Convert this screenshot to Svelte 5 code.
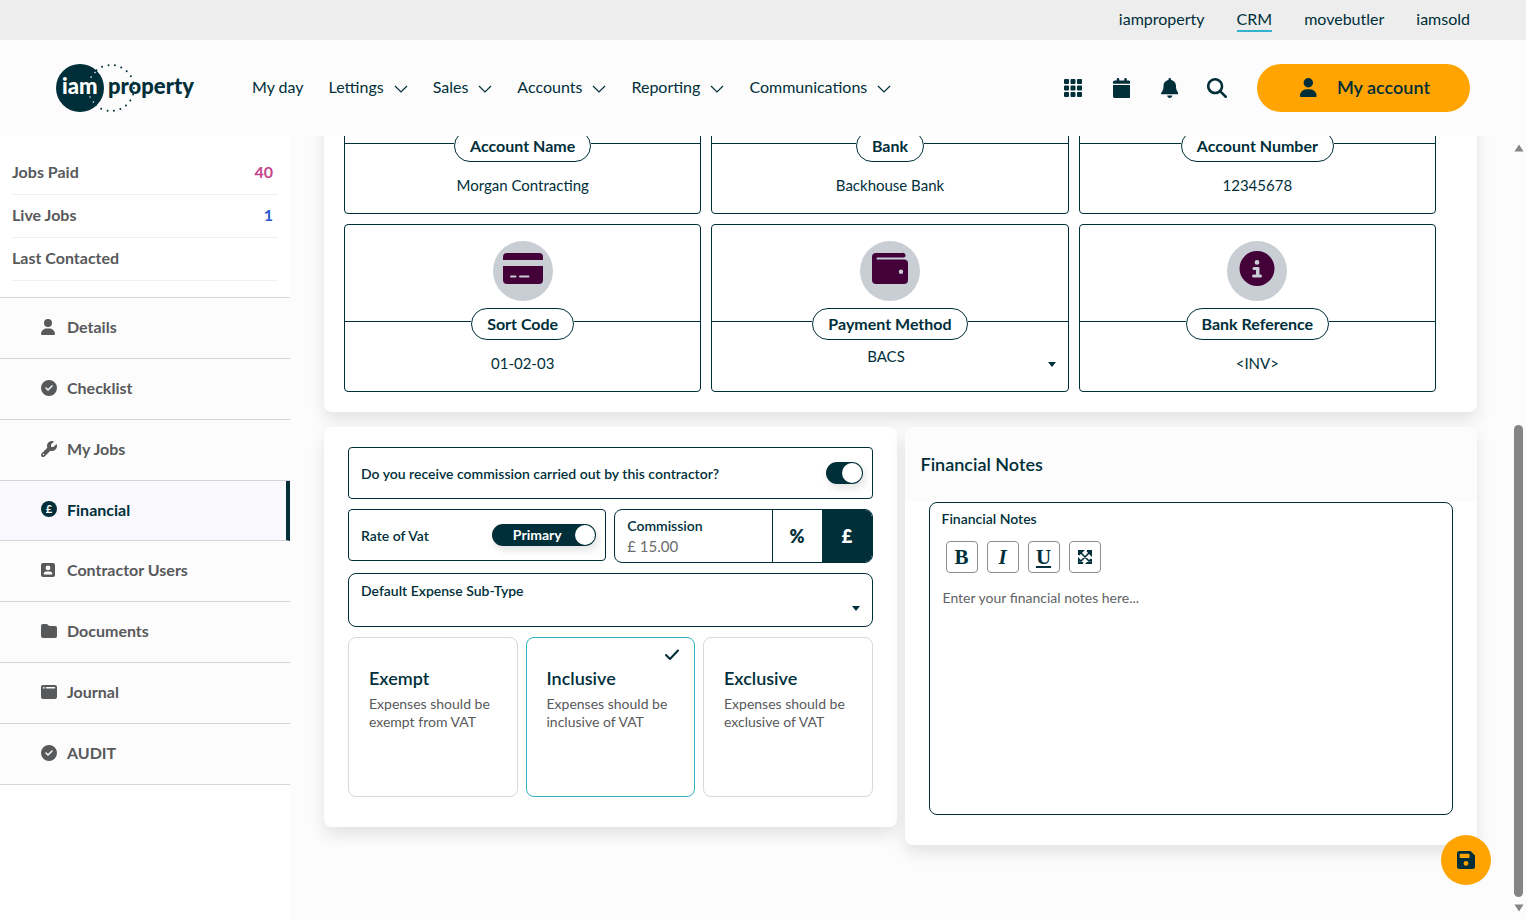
<script lang="ts">
  import { onMount } from "svelte";

  interface Tile {
    id: string;
    label: string;
    value: string;
    icon: string;
    select?: boolean;
  }

  const icons: Record<string, { box: string; d: string }> = {
    user: {
      box: "0 0 448 512",
      d: "M224 256A128 128 0 1 0 224 0a128 128 0 1 0 0 256zm-45.700 48C79.800 304 0 383.800 0 482.300C0 498.700 13.300 512 29.700 512H418.300c16.400 0 29.700-13.300 29.700-29.700C448 383.800 368.200 304 269.700 304H178.300z",
    },
    bell: {
      box: "0 0 448 512",
      d: "M224 0c-17.700 0-32 14.300-32 32V49.900C119.500 61.400 64 124.200 64 200v33.400c0 45.400-15.500 89.500-43.800 124.900L5.300 377c-5.800 7.200-6.900 17.100-2.900 25.400S14.800 416 24 416H424c9.200 0 17.600-5.300 21.600-13.600s2.900-18.200-2.900-25.400l-14.900-18.600C399.500 322.900 384 278.800 384 233.400V200c0-75.800-55.500-138.600-128-150.100V32c0-17.700-14.300-32-32-32zm45.300 493.300c12-12 18.700-28.300 18.700-45.300H160c0 17 6.700 33.300 18.700 45.300s28.300 18.700 45.300 18.700 33.300-6.700 45.300-18.700z",
    },
    search: {
      box: "0 0 512 512",
      d: "M416 208c0 45.900-14.900 88.300-40 122.700L502.600 457.400c12.500 12.500 12.500 32.800 0 45.300s-32.800 12.500-45.300 0L330.700 376c-34.400 25.200-76.800 40-122.700 40C93.100 416 0 322.900 0 208S93.100 0 208 0S416 93.100 416 208zM208 352a144 144 0 1 0 0-288 144 144 0 1 0 0 288z",
    },
    calendar: {
      box: "0 0 448 512",
      d: "M96 32V64H48C21.500 64 0 85.500 0 112v36H448V112c0-26.500-21.500-48-48-48H352V32c0-17.700-14.300-32-32-32s-32 14.300-32 32V64H160V32c0-17.700-14.300-32-32-32S96 14.300 96 32zM448 180H0V464c0 26.500 21.500 48 48 48H400c26.500 0 48-21.500 48-48V180z",
    },
    grid: {
      box: "0 0 18 18",
      d: "M1 0h3a1 1 0 0 1 1 1v3a1 1 0 0 1-1 1H1a1 1 0 0 1-1-1V1a1 1 0 0 1 1-1zM7.500 0h3a1 1 0 0 1 1 1v3a1 1 0 0 1-1 1h-3a1 1 0 0 1-1-1V1a1 1 0 0 1 1-1zM14 0h3a1 1 0 0 1 1 1v3a1 1 0 0 1-1 1h-3a1 1 0 0 1-1-1V1a1 1 0 0 1 1-1zM1 6.500h3a1 1 0 0 1 1 1v3a1 1 0 0 1-1 1H1a1 1 0 0 1-1-1v-3a1 1 0 0 1 1-1zM7.500 6.500h3a1 1 0 0 1 1 1v3a1 1 0 0 1-1 1h-3a1 1 0 0 1-1-1v-3a1 1 0 0 1 1-1zM14 6.500h3a1 1 0 0 1 1 1v3a1 1 0 0 1-1 1h-3a1 1 0 0 1-1-1v-3a1 1 0 0 1 1-1zM1 13h3a1 1 0 0 1 1 1v3a1 1 0 0 1-1 1H1a1 1 0 0 1-1-1v-3a1 1 0 0 1 1-1zM7.500 13h3a1 1 0 0 1 1 1v3a1 1 0 0 1-1 1h-3a1 1 0 0 1-1-1v-3a1 1 0 0 1 1-1zM14 13h3a1 1 0 0 1 1 1v3a1 1 0 0 1-1 1h-3a1 1 0 0 1-1-1v-3a1 1 0 0 1 1-1z",
    },
    check: {
      box: "0 0 512 512",
      d: "M256 512A256 256 0 1 0 256 0a256 256 0 1 0 0 512zM369 209L241 337c-9.400 9.400-24.600 9.400-33.900 0l-64-64c-9.400-9.400-9.400-24.600 0-33.900s24.600-9.400 33.900 0l47 47L335 175c9.400-9.400 24.600-9.400 33.900 0s9.400 24.600 0 33.900z",
    },
    wrench: {
      box: "0 0 512 512",
      d: "M352 320c88.400 0 160-71.600 160-160c0-15.300-2.200-30.100-6.200-44.200c-3.100-10.800-16.400-13.200-24.300-5.300l-76.800 76.800c-3 3-7.100 4.700-11.300 4.700H336c-8.800 0-16-7.200-16-16V118.600c0-4.200 1.700-8.300 4.700-11.300l76.800-76.800c7.900-7.900 5.400-21.200-5.300-24.300C382.100 2.200 367.300 0 352 0C263.600 0 192 71.600 192 160c0 19.100 3.400 37.500 9.500 54.500L19.900 396.100C7.200 408.800 0 426.100 0 444.100C0 481.600 30.400 512 67.900 512c18 0 35.300-7.200 48-19.900L297.500 310.500c17 6.200 35.400 9.500 54.500 9.500zM80 408a24 24 0 1 1 0 48 24 24 0 1 1 0-48z",
    },
    pound: { box: "0 0 16 16", d: "M8 0a8 8 0 1 1 0 16A8 8 0 0 1 8 0z" },
    contact: {
      box: "0 0 14 16",
      d: "M2 1h10a2 2 0 0 1 2 2v10a2 2 0 0 1-2 2H2a2 2 0 0 1-2-2V3a2 2 0 0 1 2-2zM7 3.500a2.400 2.400 0 1 0 0 4.800 2.400 2.400 0 0 0 0-4.800zM5.500 9.500A2.800 2.800 0 0 0 2.700 12.500H11.300A2.800 2.800 0 0 0 8.500 9.500z",
    },
    folder: {
      box: "0 0 16 16",
      d: "M2 1h3.200q.8 0 1.400.6l1 1q.5.4 1.200.4H14a2 2 0 0 1 2 2v8a2 2 0 0 1-2 2H2a2 2 0 0 1-2-2V3a2 2 0 0 1 2-2z",
    },
    journal: {
      box: "0 0 16 16",
      d: "M2 1h12a2 2 0 0 1 2 2v10a2 2 0 0 1-2 2H2a2 2 0 0 1-2-2V3a2 2 0 0 1 2-2zM2.800 2.900a.9.900 0 1 0 0 1.800.9.900 0 0 0 0-1.800zM5.500 3a.8.800 0 0 0 0 1.600h8a.8.800 0 0 0 0-1.600z",
    },
    card: {
      box: "0 0 40 40",
      d: "M4 4h32a4 4 0 0 1 4 4v3H0V8a4 4 0 0 1 4-4zM0 17h40v14a4 4 0 0 1-4 4H4a4 4 0 0 1-4-4zM8 26.600a1 1 0 0 0 0 2h4.500a1 1 0 0 0 0-2zM17 26.600a1 1 0 0 0 0 2h8.500a1 1 0 0 0 0-2z",
    },
    wallet: {
      box: "0 0 40 40",
      d: "M6 4h26a2.200 2.200 0 0 1 2 4.500H7.500a1 1 0 0 0 0 2H34a4 4 0 0 1 4 4V31a4 4 0 0 1-4 4H6a4 4 0 0 1-4-4V8a4 4 0 0 1 4-4zM31 20.500a2.200 2.200 0 1 0 0 4.400 2.200 2.200 0 0 0 0-4.400z",
    },
    info: {
      box: "0 0 40 40",
      d: "M20 2a17.500 17.500 0 1 0 0 35 17.500 17.500 0 0 0 0-35zM20 11a2.400 2.400 0 1 1 0 4.800 2.400 2.400 0 0 1 0-4.800zM17 18h4.200a1.300 1.300 0 0 1 1.300 1.300v6.300h1a1.500 1.500 0 0 1 0 3h-7a1.500 1.500 0 0 1 0-3h2.500V21H17a1.500 1.500 0 0 1 0-3z",
    },
    save: {
      box: "0 0 18 18",
      d: "M2.500 0h11L18 4.500v11a2.500 2.500 0 0 1-2.500 2.500h-13A2.500 2.500 0 0 1 0 15.500v-13A2.500 2.500 0 0 1 2.500 0zM3.300 2.800a.6.600 0 0 0-.6.600v3a.6.600 0 0 0 .6.600h8.600a.6.600 0 0 0 .6-.6v-3a.6.600 0 0 0-.6-.6zM9 10a2.400 2.400 0 1 0 0 4.800 2.400 2.400 0 0 0 0-4.800z",
    },
  };

  const sites = ["iamproperty", "CRM", "movebutler", "iamsold"];
  const menu = ["My day", "Lettings", "Sales", "Accounts", "Reporting", "Communications"];
  const tools = [
    { icon: "grid", label: "Apps" },
    { icon: "calendar", label: "Calendar" },
    { icon: "bell", label: "Notifications" },
    { icon: "search", label: "Search" },
  ];
  const sections = [
    { name: "Details", icon: "user" },
    { name: "Checklist", icon: "check" },
    { name: "My Jobs", icon: "wrench" },
    { name: "Financial", icon: "pound" },
    { name: "Contractor Users", icon: "contact" },
    { name: "Documents", icon: "folder" },
    { name: "Journal", icon: "journal" },
    { name: "AUDIT", icon: "check" },
  ];
  const tiles: Tile[] = [
    { id: "name", label: "Account Name", value: "Morgan Contracting", icon: "user" },
    { id: "bank", label: "Bank", value: "Backhouse Bank", icon: "wallet" },
    { id: "number", label: "Account Number", value: "12345678", icon: "card" },
    { id: "sort", label: "Sort Code", value: "01-02-03", icon: "card" },
    { id: "method", label: "Payment Method", value: "BACS", icon: "wallet", select: true },
    { id: "ref", label: "Bank Reference", value: "<INV>", icon: "info" },
  ];
  const vatOptions = [
    { name: "Exempt", text: "Expenses should be exempt from VAT" },
    { name: "Inclusive", text: "Expenses should be inclusive of VAT" },
    { name: "Exclusive", text: "Expenses should be exclusive of VAT" },
  ];

  let active = $state("Financial");
  let commission = $state(true);
  let primary = $state(true);
  let unit = $state("£");
  let vat = $state("Inclusive");
  let notes = $state("");
  let scroller: HTMLElement | undefined;

  // the financial settings sit at the end of the page
  onMount(() => {
    if (scroller) scroller.scrollTop = scroller.scrollHeight;
  });
</script>

{#snippet icon(name: string)}
  <svg class="icon" viewBox={icons[name].box} fill="currentColor" fill-rule="evenodd" aria-hidden="true">
    <path d={icons[name].d} />
    {#if name === "pound"}
      <text x="8" y="12" text-anchor="middle" font-size="11" font-weight="700" fill="#fff">£</text>
    {/if}
  </svg>
{/snippet}

{#snippet caret()}
  <svg class="caret" viewBox="0 0 8 5" aria-hidden="true"><path d="M0 0h8L4 5z" fill="#002f3a" /></svg>
{/snippet}

<div class="page">
  <nav class="sites" aria-label="Sites">
    {#each sites as site}
      <a href="#{site}" class:current={site === "CRM"}>{site}</a>
    {/each}
  </nav>

  <header>
    <a class="logo" href="#home" aria-label="iamproperty">
      <svg width="144" height="48" viewBox="0 0 144 48">
        <circle cx="24" cy="24" r="24" fill="#002f3a" />
        <circle cx="55" cy="24" r="23" fill="none" stroke="#002f3a" stroke-width="2" stroke-linecap="round" stroke-dasharray="0 6.570" />
        <path d="M39 8.500A22.800 22.800 0 0 0 34 15M34 33A22.800 22.800 0 0 0 39 39.500" fill="none" stroke="#fff" stroke-width="1.600" stroke-linecap="round" stroke-dasharray="0 6" />
        <text x="6" y="30" font-size="22" font-weight="900" fill="#fff">iam</text>
        <text x="52" y="30" font-size="22" font-weight="900" fill="#002f3a">property</text>
      </svg>
    </a>
    <nav class="menu" aria-label="Main">
      {#each menu as item, i}
        <a href="#{item}">
          {item}
          {#if i > 0}
            <svg width="14" height="8" viewBox="0 0 14 8" aria-hidden="true">
              <path d="M1 1l6 6 6-6" fill="none" stroke="currentColor" stroke-width="1.200" />
            </svg>
          {/if}
        </a>
      {/each}
    </nav>
    <div class="tools">
      {#each tools as tool}
        <button type="button" aria-label={tool.label}>{@render icon(tool.icon)}</button>
      {/each}
    </div>
    <button type="button" class="account">{@render icon("user")}My account</button>
  </header>

  <div class="body">
    <aside>
      <dl class="stats">
        <div><dt>Jobs Paid</dt><dd class="pink">40</dd></div>
        <div><dt>Live Jobs</dt><dd class="blue">1</dd></div>
        <div><dt>Last Contacted</dt><dd></dd></div>
      </dl>
      <nav class="sections" aria-label="Contractor">
        {#each sections as s}
          <a href="#{s.name}" class:active={active === s.name} onclick={() => (active = s.name)}>
            <span class="section-icon">{@render icon(s.icon)}</span>
            {s.name}
          </a>
        {/each}
      </nav>
    </aside>

    <main bind:this={scroller}>
      <section class="card tiles">
        {#each tiles as tile}
          <div class="tile">
            <span class="badge">{@render icon(tile.icon)}</span>
            <div class="tile-label"><label for={tile.id}>{tile.label}</label></div>
            {#if tile.select}
              <div class="tile-select">
                <select id={tile.id}><option>{tile.value}</option></select>
                {@render caret()}
              </div>
            {:else}
              <input id={tile.id} value={tile.value} />
            {/if}
          </div>
        {/each}
      </section>

      <div class="columns">
        <section class="card settings">
          <div class="field">
            <label for="commission">Do you receive commission carried out by this contractor?</label>
            <span class="switch">
              <input id="commission" type="checkbox" role="switch" bind:checked={commission} />
            </span>
          </div>

          <div class="pair">
            <div class="field">
              <label for="rate">Rate of Vat</label>
              <span class="switch wide">
                <span>Primary</span>
                <input id="rate" type="checkbox" role="switch" bind:checked={primary} />
              </span>
            </div>
            <div class="amount">
              <div class="amount-text">
                <label for="amount">Commission</label>
                <input id="amount" value="£ 15.00" />
              </div>
              <button type="button" class:on={unit === "%"} onclick={() => (unit = "%")}>%</button>
              <button type="button" class:on={unit === "£"} onclick={() => (unit = "£")}>£</button>
            </div>
          </div>

          <div class="expense">
            <label for="expense">Default Expense Sub-Type</label>
            <select id="expense"><option></option></select>
            {@render caret()}
          </div>

          <div class="options">
            {#each vatOptions as o}
              <label class="option" class:chosen={vat === o.name}>
                <input type="radio" name="vat" value={o.name} bind:group={vat} />
                <span class="option-title">{o.name}</span>
                <span class="option-text">{o.text}</span>
                {#if vat === o.name}
                  <svg class="tick" viewBox="0 0 14 12" aria-hidden="true">
                    <path d="M1 6l4 4 8-8.500" fill="none" stroke="#002f3a" stroke-width="2" stroke-linecap="round" stroke-linejoin="round" />
                  </svg>
                {/if}
              </label>
            {/each}
          </div>
        </section>

        <section class="card notes">
          <h2>Financial Notes</h2>
          <div class="editor">
            <div class="editor-box">
              <label for="notes">Financial Notes</label>
              <div class="toolbar">
                <button type="button" aria-label="Bold">B</button>
                <button type="button" aria-label="Italic"><i>I</i></button>
                <button type="button" aria-label="Underline"><u>U</u></button>
                <button type="button" aria-label="Full screen">
                  <svg width="16" height="16" viewBox="0 0 16 16" fill="none" stroke="currentColor" stroke-width="1.600" aria-hidden="true">
                    <path d="M2 2l12 12M14 2L2 14M1.800 6V1.800H6L1.800 6M10 1.800h4.200V6L10 1.800M14.200 10v4.200H10l4.200-4.200M6 14.200H1.800V10L6 14.200" />
                  </svg>
                </button>
              </div>
              <textarea id="notes" placeholder="Enter your financial notes here..." bind:value={notes}></textarea>
            </div>
          </div>
        </section>
      </div>
    </main>

    <div class="scrollbar" aria-hidden="true">
      <svg width="10" height="8" viewBox="0 0 10 8"><path d="M5 0.500L9.500 7.500H0.500z" fill="#858585" /></svg>
      <div class="track"><div class="thumb"></div></div>
      <svg width="10" height="8" viewBox="0 0 10 8"><path d="M5 7.500L9.500 0.500H0.500z" fill="#858585" /></svg>
    </div>
  </div>

  <button type="button" class="save" aria-label="Save">{@render icon("save")}</button>
</div>

<style>
  :global(body) {
    margin: 0;
    background: #fcfcfc;
  }

  .page {
    height: 100vh;
    display: flex;
    flex-direction: column;
    font-family: Lato, "Liberation Sans", sans-serif;
    font-size: 16px;
    color: #002f3a;
  }
  .page *,
  .page *::before,
  .page *::after { box-sizing: border-box; }
  a { color: inherit; text-decoration: none; }
  button, input, select, textarea {
    font: inherit;
    color: inherit;
    background: none;
    border: none;
    border-radius: 0;
    margin: 0;
    padding: 0;
  }
  button { cursor: pointer; }
  select { appearance: none; }
  .icon { display: block; height: 100%; }

  .sites {
    flex: none;
    height: 40px;
    display: flex;
    justify-content: flex-end;
    align-items: center;
    gap: 32px;
    padding: 0 56px;
    background: #ededed;
  }
  .sites a {
    line-height: 22px;
    border-bottom: 2px solid transparent;
  }
  .sites .current { border-color: #35b1d0; }

  header {
    flex: none;
    height: 96px;
    display: flex;
    align-items: center;
    padding: 0 56px;
  }
  .logo { display: flex; }
  .menu {
    flex: 1;
    display: flex;
    gap: 25px;
    margin-left: 52px;
  }
  .menu a {
    display: flex;
    align-items: center;
    gap: 10px;
    padding-bottom: 3px;
    white-space: nowrap;
  }
  .menu svg { margin-top: 4px; }
  .tools {
    display: flex;
    gap: 28px;
    margin-right: 30px;
  }
  .tools button {
    width: 20px;
    height: 20px;
    display: flex;
    justify-content: center;
    align-items: center;
  }
  .tools button:first-child { padding: 1px; }
  .account {
    display: flex;
    align-items: center;
    gap: 20px;
    height: 48px;
    padding: 0 40px 2px 43px;
    border-radius: 24px;
    background: #ffa400;
    font-size: 18px;
    font-weight: 600;
  }
  .account .icon { height: 19px; }

  .body {
    flex: 1;
    min-height: 0;
    display: flex;
  }
  aside {
    flex: none;
    width: 290px;
    background: #fff;
    color: #58595b;
    font-weight: 700;
  }
  .stats {
    margin: 0;
    padding: 16px 12px;
  }
  .stats div {
    height: 43px;
    display: flex;
    justify-content: space-between;
    align-items: center;
    padding: 0 5px 3px 0;
    border-bottom: 1px solid #f0f0f0;
  }
  .stats dd { margin: 0; }
  .pink { color: #c5448c; }
  .blue { color: #2d5bd0; }
  .sections { border-top: 1px solid #d3d5d8; }
  .sections a {
    height: 61px;
    display: flex;
    align-items: center;
    gap: 10px;
    padding: 0 0 3px 41px;
    background: #fcfcfc;
    border-bottom: 1px solid #d3d5d8;
  }
  .sections .active {
    height: 60px;
    background: #f8f8fd;
    color: #002f3a;
    border-right: 4px solid #002f3a;
  }
  .section-icon {
    width: 16px;
    height: 16px;
  }

  main {
    flex: 1;
    overflow-y: scroll;
    scrollbar-width: none;
    padding: 34px 34px 75px;
  }
  .card {
    background: #fff;
    border-radius: 8px;
    box-shadow: 0 8px 16px rgba(0, 0, 0, 0.1);
  }
  .tiles {
    display: grid;
    grid-template-columns: repeat(3, 1fr);
    gap: 10px;
    padding: 20px 41px 20px 20px;
    margin-bottom: 15px;
  }
  .tile {
    height: 168px;
    display: flex;
    flex-direction: column;
    align-items: center;
    padding-top: 16px;
    border: 1px solid #002f3a;
    border-radius: 4px;
  }
  .badge {
    width: 60px;
    height: 60px;
    display: flex;
    justify-content: center;
    padding: 8px;
    margin-bottom: 7px;
    border-radius: 50%;
    background: #c9cdd4;
    color: #430039;
  }
  .badge .icon { height: 40px; }
  .tile-label {
    width: 100%;
    display: flex;
  }
  .tile-label::before,
  .tile-label::after {
    content: "";
    flex: 1;
    margin-top: 13px;
    border-top: 1px solid #002f3a;
  }
  .tile-label label {
    height: 32px;
    line-height: 30px;
    padding: 0 15px;
    border: 1px solid #002f3a;
    border-radius: 16px;
    font-weight: 700;
  }
  .tile > input {
    width: 100%;
    height: 46px;
    font-size: 15px;
    text-align: center;
  }
  .tile-select {
    position: relative;
    width: 100%;
    height: 48px;
  }
  .tile-select select {
    width: 100%;
    height: 32px;
    padding-right: 8px;
    font-size: 15px;
    text-align-last: center;
  }
  .caret {
    position: absolute;
    right: 12px;
    bottom: 21px;
    width: 8px;
    height: 5px;
    pointer-events: none;
  }

  .columns {
    display: grid;
    grid-template-columns: 1fr 1fr;
    align-items: start;
    gap: 8px;
  }
  .settings {
    display: flex;
    flex-direction: column;
    gap: 10px;
    padding: 20px 24px 30px;
    font-size: 14px;
  }
  .settings label { font-weight: 600; }
  .field {
    height: 52px;
    display: flex;
    justify-content: space-between;
    align-items: center;
    padding: 0 9px 0 12px;
    border: 1px solid #002f3a;
    border-radius: 4px;
  }
  .switch {
    width: 37px;
    height: 22px;
    display: flex;
    justify-content: flex-end;
    align-items: center;
    padding: 1px;
    border-radius: 11px;
    background: #002f3a;
    box-shadow: 2px 4px 8px rgba(0, 0, 0, 0.12);
  }
  .switch input {
    appearance: none;
    width: 20px;
    height: 20px;
    border-radius: 50%;
    background: #fff;
    cursor: pointer;
  }
  .wide { width: 104px; }
  .wide span {
    flex: 1;
    padding: 0 0 2px 6px;
    color: #fff;
    font-weight: 700;
    text-align: center;
  }
  .pair {
    display: grid;
    grid-template-columns: 1fr 1fr;
    align-items: start;
    gap: 8px;
  }
  .amount {
    height: 54px;
    display: flex;
    overflow: hidden;
    border: 1px solid #002f3a;
    border-radius: 8px;
  }
  .amount-text {
    flex: 1;
    min-width: 0;
    display: flex;
    flex-direction: column;
    padding: 6px 12px;
  }
  .amount-text label { line-height: 20px; }
  .amount-text input {
    width: 100%;
    height: 20px;
    font-size: 15px;
    color: #6b6b6b;
  }
  .amount button {
    width: 50px;
    border-left: 1px solid #002f3a;
    font-size: 18px;
    font-weight: 800;
  }
  .amount .on { background: #002f3a; color: #fff; }
  .expense {
    position: relative;
    height: 54px;
    display: flex;
    flex-direction: column;
    padding: 7px 12px;
    border: 1px solid #002f3a;
    border-radius: 8px;
  }
  .expense label { line-height: 20px; }
  .expense select { height: 20px; }
  .expense .caret { bottom: 15px; }

  .options {
    display: grid;
    grid-template-columns: repeat(3, 1fr);
    gap: 8px;
  }
  .option {
    position: relative;
    height: 160px;
    display: flex;
    flex-direction: column;
    padding: 28px 20px;
    border: 1px solid #d9d9d9;
    border-radius: 8px;
    cursor: pointer;
  }
  .option input {
    position: absolute;
    inset: 0;
    appearance: none;
  }
  .chosen { border-color: #30afbf; }
  .option-title {
    font-size: 18px;
    line-height: 24px;
    margin-bottom: 5px;
  }
  .option-text {
    font-weight: 400;
    line-height: 18px;
    color: #58595b;
  }
  .tick {
    position: absolute;
    top: 11px;
    right: 15px;
    width: 14px;
    height: 12px;
  }

  .notes h2 {
    height: 75px;
    margin: 0;
    padding: 0 16px;
    border-radius: 8px 8px 0 0;
    background: #fcfcfc;
    font-size: 18px;
    font-weight: 600;
    line-height: 75px;
  }
  .editor { padding: 0 24px 30px; }
  .editor-box {
    height: 313px;
    display: flex;
    flex-direction: column;
    padding: 6px 12px 12px;
    border: 1px solid #002f3a;
    border-radius: 8px;
    font-size: 14px;
  }
  .editor-box label { font-weight: 600; line-height: 20px; }
  .toolbar {
    display: flex;
    gap: 9px;
    padding: 12px 4px;
  }
  .toolbar button {
    width: 32px;
    height: 32px;
    display: flex;
    justify-content: center;
    align-items: center;
    border: 1px solid #8b8f94;
    border-radius: 4px;
    font: bold 21px "Liberation Serif", serif;
  }
  textarea {
    flex: 1;
    resize: none;
    padding: 3px 1px;
    line-height: 20px;
  }
  textarea::placeholder { color: #616365; opacity: 1; }

  .scrollbar {
    flex: none;
    width: 15px;
    display: flex;
    flex-direction: column;
    align-items: center;
    padding: 8px 0;
  }
  .track {
    flex: 1;
    display: flex;
    align-items: flex-end;
    padding: 7px 0;
  }
  .thumb {
    width: 9px;
    height: 64%;
    border-radius: 5px;
    background: #858585;
  }

  .save {
    position: absolute;
    right: 35px;
    bottom: 35px;
    width: 50px;
    height: 50px;
    padding: 16px;
    border-radius: 50%;
    background: #ffa400;
  }
</style>
